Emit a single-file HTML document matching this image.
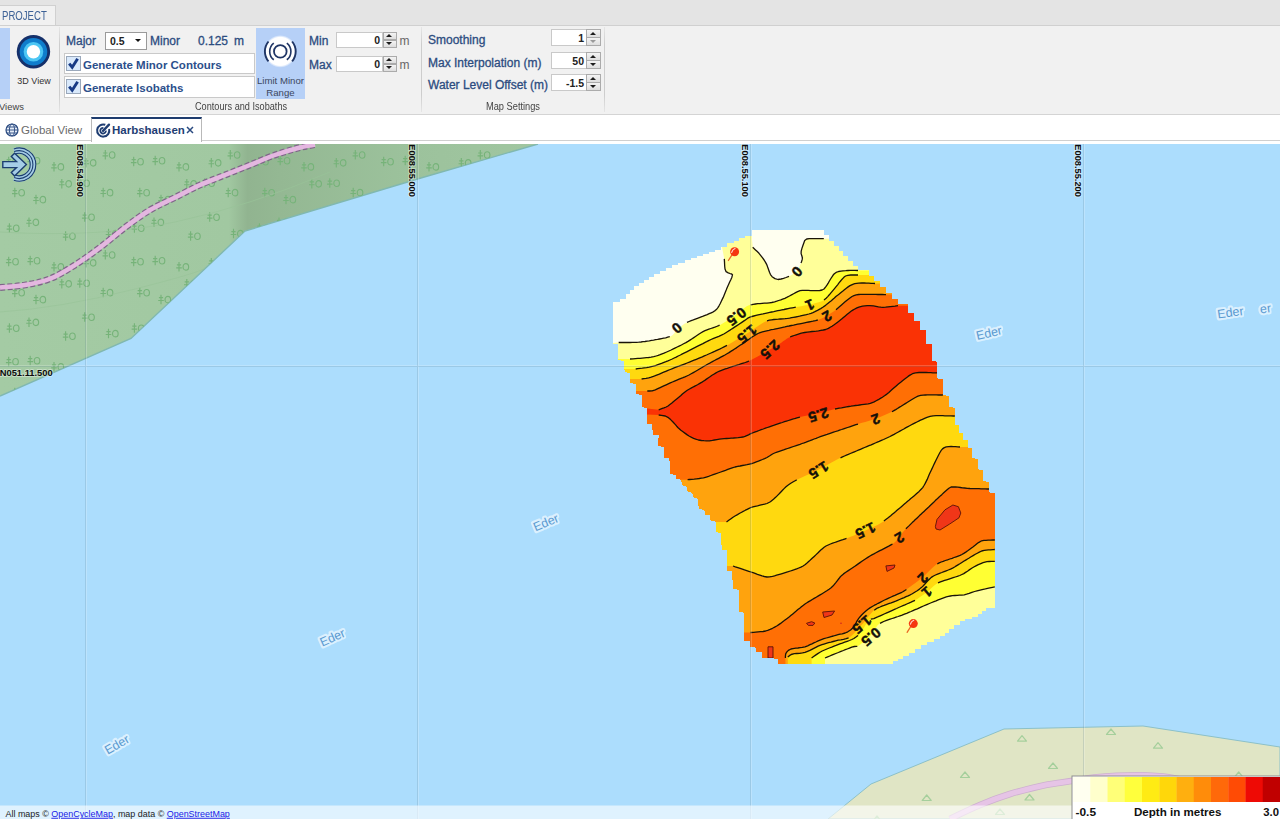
<!DOCTYPE html>
<html><head><meta charset="utf-8"><title>Harbshausen</title>
<style>
*{box-sizing:border-box;margin:0;padding:0}
html,body{width:1280px;height:819px;overflow:hidden;background:#fff;font-family:"Liberation Sans",sans-serif;}
.abs{position:absolute}
#top{position:absolute;left:0;top:0;width:1280px;height:25px;background:#e4e4e4}
#ptab{position:absolute;left:-1px;top:5px;width:57px;height:21px;background:#f1f1f1;border:1px solid #d0d0d0;border-bottom:none}
#ptab span{position:absolute;left:2px;top:2.5px;font-size:12px;color:#3d6196;transform:scaleX(0.80);transform-origin:0 0}
#ribbon{position:absolute;left:0;top:25px;width:1280px;height:90px;background:#f1f1f1;border-top:1px solid #d0d0d0;border-bottom:1px solid #d4d4d4}
.lbl{position:absolute;font-size:12px;color:#2c4c80;-webkit-text-stroke:0.3px #2c4c80;white-space:nowrap;line-height:14px}
.blbl{position:absolute;font-size:11.5px;font-weight:bold;color:#2c4f8c;white-space:nowrap;line-height:14px}
.grp{position:absolute;font-size:10px;color:#444;white-space:nowrap;line-height:12px}
.sep{position:absolute;top:27px;width:1px;height:85px;background:linear-gradient(#e6e6e6,#cdcdcd 20%,#cdcdcd 80%,#e6e6e6)}
.box{position:absolute;background:#fff;border:1px solid #c9c9c9}
.val{position:absolute;font-size:10.5px;font-weight:bold;color:#222;white-space:nowrap;line-height:12px}
.spin{position:absolute;width:14.5px;height:17px}
.spin b,.spin u{position:absolute;left:0;width:14.5px;height:8.6px;border:1px solid #ababab;background:linear-gradient(#f4f4f4,#dedede)}
.spin b{top:0}.spin u{top:8.4px}
.spin b:after{content:"";position:absolute;left:2.6px;top:1.6px;border:3.6px solid transparent;border-top:none;border-bottom:3.4px solid #1d1d1d}
.spin u:after{content:"";position:absolute;left:2.6px;top:1.8px;border:3.6px solid transparent;border-bottom:none;border-top:3.4px solid #1d1d1d}
.spin.dis u:after{border-top-color:#9a9a9a}
.spin.sm{height:15.5px}.spin.sm b,.spin.sm u{height:8px}.spin.sm u{top:7.5px}
.spin.sm b:after{top:1.3px}.spin.sm u:after{top:1.5px}
.unit{position:absolute;font-size:12px;color:#666;line-height:14px}
#tabs{position:absolute;left:0;top:115px;width:1280px;height:29px;background:#fff}
</style></head><body>
<div id="top"><div id="ptab"><span>PROJECT</span></div></div>
<div id="ribbon"></div>

<!-- Views group -->
<div class="abs" style="left:0;top:28px;width:10px;height:71px;background:#b6d0f7"></div>
<svg class="abs" style="left:14px;top:32px" width="40" height="40" viewBox="0 0 40 40">
<circle cx="19.45" cy="19.7" r="16.7" fill="#15306a"/>
<circle cx="19.45" cy="19.7" r="13.8" fill="#0f7dcc"/>
<circle cx="19.45" cy="19.7" r="9.8" fill="#4cc6f4"/>
<circle cx="19.45" cy="19.7" r="6.7" fill="#ffffff"/>
</svg>
<div class="grp" style="left:17.3px;top:75px;font-size:9px;color:#333">3D View</div>
<div class="grp" style="left:-1px;top:101px;font-size:9.4px">Views</div>
<div class="sep" style="left:59px"></div>
<!-- Contours group -->
<div class="lbl" style="left:66px;top:34px">Major</div>
<div class="box" style="left:105px;top:32px;width:42px;height:18px;border-color:#9a9a9a"></div>
<div class="val" style="left:110px;top:35px">0.5</div>
<div class="abs" style="left:135px;top:39px;border:3px solid transparent;border-bottom:none;border-top:3.5px solid #111"></div>
<div class="lbl" style="left:150px;top:34px">Minor</div>
<div class="lbl" style="left:198px;top:34px">0.125</div>
<div class="lbl" style="left:234px;top:34px">m</div>
<div class="box" style="left:64px;top:53px;width:191px;height:21px"></div>
<div class="box" style="left:64px;top:76px;width:191px;height:22px"></div>
<div class="box" style="left:66px;top:56px;width:15px;height:15px;background:#d9e9fb;border-color:#9aa8bb"></div>
<div class="box" style="left:66px;top:79px;width:15px;height:15px;background:#d9e9fb;border-color:#9aa8bb"></div>
<svg class="abs" style="left:66px;top:56px" width="15" height="15" viewBox="0 0 15 15"><path d="M3.2 7.6 L6.2 11.2 L11.6 2.8" fill="none" stroke="#173a85" stroke-width="2.9" stroke-linejoin="miter"/></svg>
<svg class="abs" style="left:66px;top:79px" width="15" height="15" viewBox="0 0 15 15"><path d="M3.2 7.6 L6.2 11.2 L11.6 2.8" fill="none" stroke="#173a85" stroke-width="2.9" stroke-linejoin="miter"/></svg>
<div class="blbl" style="left:83px;top:58px">Generate Minor Contours</div>
<div class="blbl" style="left:83px;top:81px">Generate Isobaths</div>
<div class="abs" style="left:256px;top:28px;width:49px;height:71px;background:#b6d0f7"></div>
<svg class="abs" style="left:260px;top:31px" width="40" height="40" viewBox="0 0 40 40">
<defs><radialGradient id="glow"><stop offset="0.86" stop-color="#fff"/><stop offset="1" stop-color="#fff" stop-opacity="0"/></radialGradient></defs>
<circle cx="20.3" cy="20.4" r="16.3" fill="url(#glow)"/>
<circle cx="20.3" cy="20.4" r="6.3" fill="none" stroke="#1f3565" stroke-width="1.8"/>
<path d="M26.83 12.05A10.6 10.6 0 0 1 26.83 28.75M13.77 28.75A10.6 10.6 0 0 1 13.77 12.05" fill="none" stroke="#1f3565" stroke-width="1.6"/>
<path d="M32.10 10.50A15.4 15.4 0 0 1 32.10 30.30M8.50 30.30A15.4 15.4 0 0 1 8.50 10.50" fill="none" stroke="#1f3565" stroke-width="1.9"/>
</svg>
<div class="grp" style="left:256px;top:75px;width:49px;text-align:center;font-size:9.6px;color:#3c4760;line-height:11.6px;white-space:normal">Limit Minor Range</div>
<div class="grp" style="left:195px;top:101px;transform:scaleX(0.915);transform-origin:0 0">Contours and Isobaths</div>
<div class="lbl" style="left:309px;top:34px">Min</div>
<div class="lbl" style="left:309px;top:57.5px">Max</div>
<div class="box" style="left:336px;top:32px;width:47px;height:15.5px"></div>
<div class="box" style="left:336px;top:56px;width:47px;height:15.5px"></div>
<div class="val" style="left:336px;top:34px;width:44px;text-align:right">0</div>
<div class="val" style="left:336px;top:58px;width:44px;text-align:right">0</div>
<div class="spin sm" style="left:382.5px;top:32px"><b></b><u></u></div>
<div class="spin sm" style="left:382.5px;top:56px"><b></b><u></u></div>
<div class="unit" style="left:399.5px;top:34px">m</div>
<div class="unit" style="left:399.5px;top:57.5px">m</div>
<div class="sep" style="left:421px"></div>
<!-- Map settings -->
<div class="lbl" style="left:428px;top:33px">Smoothing</div>
<div class="lbl" style="left:428px;top:56px">Max Interpolation (m)</div>
<div class="lbl" style="left:428px;top:78px">Water Level Offset (m)</div>
<div class="box" style="left:551px;top:29px;width:36px;height:17px"></div>
<div class="box" style="left:551px;top:52px;width:36px;height:17px"></div>
<div class="box" style="left:551px;top:74px;width:36px;height:17px"></div>
<div class="val" style="left:551px;top:32px;width:33px;text-align:right">1</div>
<div class="val" style="left:551px;top:55px;width:33px;text-align:right">50</div>
<div class="val" style="left:551px;top:77px;width:33px;text-align:right">-1.5</div>
<div class="spin dis" style="left:586px;top:29px"><b></b><u></u></div>
<div class="spin" style="left:586px;top:52px"><b></b><u></u></div>
<div class="spin" style="left:586px;top:74px"><b></b><u></u></div>
<div class="grp" style="left:486px;top:101px;transform:scaleX(0.925);transform-origin:0 0">Map Settings</div>
<div class="sep" style="left:604px"></div>

<div id="tabs"></div>

<div class="abs" style="left:0;top:140px;width:1280px;height:1px;background:#cfcfcf"></div>
<div class="abs" style="left:91px;top:117px;width:111px;height:25px;background:#fff;border:1px solid #b9b9b9;border-top:2px solid #1e3c6e;border-bottom:none"></div>
<svg class="abs" style="left:5px;top:123px" width="14" height="14" viewBox="0 0 14 14">
<circle cx="7" cy="7" r="6" fill="#e4ecf7" stroke="#2a4a80" stroke-width="1.2"/>
<ellipse cx="7" cy="7" rx="2.6" ry="6" fill="none" stroke="#2a4a80" stroke-width="0.9"/>
<path d="M1 7H13M2 4H12M2 10H12" stroke="#2a4a80" stroke-width="0.9" fill="none"/>
</svg>
<div class="abs" style="left:21px;top:123px;font-size:11.5px;color:#6b6b6b;line-height:14px;white-space:nowrap">Global View</div>
<svg class="abs" style="left:95px;top:122px" width="17" height="17" viewBox="0 0 17 17">
<path d="M14.1 6.9 A6.1 6.1 0 1 1 10.3 2.8" fill="none" stroke="#1f3d72" stroke-width="2"/>
<path d="M10.9 8.6 A2.8 2.8 0 1 1 8.4 5.9" fill="none" stroke="#1f3d72" stroke-width="1.8"/>
<path d="M8 8.9 L14 2.6" stroke="#1f3d72" stroke-width="2.3" stroke-linecap="round"/>
</svg>
<div class="abs" style="left:112px;top:123px;font-size:11.5px;font-weight:bold;color:#1f3d73;line-height:14px;white-space:nowrap">Harbshausen</div>
<svg class="abs" style="left:186px;top:126px" width="8" height="8" viewBox="0 0 8 8"><path d="M1 1L7 7M7 1L1 7" stroke="#2a4a80" stroke-width="1.5"/></svg>

<svg id="map" class="abs" style="left:0;top:144px" width="1280" height="675" viewBox="0 144 1280 675" font-family="Liberation Sans, sans-serif">
<rect x="0" y="144" width="1280" height="675" fill="#acddfd"/>

<defs>
<g id="tr" fill="none" stroke="#76b379" stroke-width="1.05" transform="scale(1.12)"><path d="M2.5 0v8.5M0.6 2.6h3.8M0 5.2h5"/><ellipse cx="8.6" cy="4.4" rx="2.5" ry="2.9"/></g>
<pattern id="trees" x="0" y="144" width="125" height="100" patternUnits="userSpaceOnUse"><use href="#tr" x="5.9" y="12.8"/><use href="#tr" x="12.0" y="43.8"/><use href="#tr" x="6.6" y="79.3"/><use href="#tr" x="27.4" y="11.8"/><use href="#tr" x="33.2" y="50.7"/><use href="#tr" x="26.2" y="73.4"/><use href="#tr" x="51.2" y="18.0"/><use href="#tr" x="59.0" y="34.9"/><use href="#tr" x="62.8" y="87.3"/><use href="#tr" x="83.5" y="13.9"/><use href="#tr" x="77.0" y="34.3"/><use href="#tr" x="81.9" y="68.3"/><use href="#tr" x="102.5" y="6.1"/><use href="#tr" x="100.4" y="43.7"/><use href="#tr" x="105.7" y="84.7"/></pattern>
<linearGradient id="fshade" x1="0" y1="0" x2="1" y2="0">
<stop offset="0" stop-color="#a4cba4"/><stop offset="0.425" stop-color="#a1c8a1"/><stop offset="0.46" stop-color="#91b490"/><stop offset="0.52" stop-color="#94b893"/><stop offset="0.76" stop-color="#9cc29c"/><stop offset="1" stop-color="#a0c6a0"/>
</linearGradient>
</defs>
<!-- forest -->
<path id="forest" d="M0 144H538L417.5 179L245 231L131 338.5L0 396Z" fill="url(#fshade)"/>
<path d="M538 144L417.5 179L245 231L131 338.5L0 396" fill="none" stroke="#80b8b0" stroke-width="1.4"/>
<path d="M0 144H538L417.5 179L245 231L131 338.5L0 396Z" fill="url(#trees)"/>
<path d="M0 232Q100 238 175 222T330 172" fill="none" stroke="#98c398" stroke-width="1" opacity=".7"/>
<path d="M0 312Q60 308 131 290T205 268" fill="none" stroke="#98c398" stroke-width="1" opacity=".6"/>
<!-- cycle path -->
<path id="cpath" d="M0 287.5C8.3 286.8 16.7 286.4 25 285C33.3 283.6 41.7 282.1 50 278.8C58.3 275.5 66.7 270.2 75 265C83.3 259.8 91.7 253.8 100 247.5C108.3 241.2 116.7 233.8 125 227.5C133.3 221.2 141.7 215.0 150 210C158.3 205.0 166.7 201.7 175 197.5C183.3 193.3 191.7 188.8 200 185C208.3 181.2 216.7 178.3 225 175C233.3 171.7 241.7 168.3 250 165C258.3 161.7 266.7 157.9 275 155C283.3 152.1 293.3 149.2 300 147.5C306.7 145.8 308.3 146.1 315 144.5" fill="none" stroke="#7f6589" stroke-width="6.8" stroke-dasharray="5 2.5"/>
<path d="M0 287.5C8.3 286.8 16.7 286.4 25 285C33.3 283.6 41.7 282.1 50 278.8C58.3 275.5 66.7 270.2 75 265C83.3 259.8 91.7 253.8 100 247.5C108.3 241.2 116.7 233.8 125 227.5C133.3 221.2 141.7 215.0 150 210C158.3 205.0 166.7 201.7 175 197.5C183.3 193.3 191.7 188.8 200 185C208.3 181.2 216.7 178.3 225 175C233.3 171.7 241.7 168.3 250 165C258.3 161.7 266.7 157.9 275 155C283.3 152.1 293.3 149.2 300 147.5C306.7 145.8 308.3 146.1 315 144.5" fill="none" stroke="#e4b7e0" stroke-width="4.4"/>
<!-- land bottom-right -->
<path d="M828 819L871 784L1004 729L1143 726L1280 747V819Z" fill="#e0e5c5" stroke="#8cc0c8" stroke-width="1"/>
<g fill="none" stroke="#a5cf9c" stroke-width="1.2" stroke-linejoin="round"><path d="M1017.5 741.1L1022.0 735.6L1026.5 741.1Z"/><path d="M1106.5 734.5L1111.0 729.0L1115.5 734.5Z"/><path d="M1153.5 748.2L1158.0 742.7L1162.5 748.2Z"/><path d="M1048.5 768.5L1053.0 763.0L1057.5 768.5Z"/><path d="M960.5 777.5L965.0 772.0L969.5 777.5Z"/><path d="M922.2 800.5L926.7 795.0L931.2 800.5Z"/><path d="M1025.0 800.0L1029.5 794.5L1034.0 800.0Z"/><path d="M1234.2 777.5L1238.7 772.0L1243.2 777.5Z"/><path d="M872.5 821.5L877.0 816.0L881.5 821.5Z"/><path d="M995.5 814.5L1000.0 809.0L1004.5 814.5Z"/></g>
<path d="M950 819C960.0 814.0 970.0 809.2 980 805C990.0 800.8 1000.0 797.1 1010 794C1020.0 790.9 1031.7 788.1 1040 786.2C1048.3 784.3 1053.8 783.8 1060 782.8C1066.2 781.8 1071.3 781.1 1077 780.2C1082.7 779.3 1087.4 778.3 1094 777.6C1100.6 776.9 1108.6 776.2 1116.7 775.8C1124.8 775.4 1134.8 775.1 1142.5 775.2C1150.2 775.3 1156.8 775.9 1163 776.6C1169.2 777.3 1168.8 777.3 1180 779.2C1191.2 781.1 1213.3 785.0 1230 788C1246.7 791.0 1268.3 795.0 1280 797" fill="none" stroke="#cdb0cf" stroke-width="6.6"/>
<path d="M950 819C960.0 814.0 970.0 809.2 980 805C990.0 800.8 1000.0 797.1 1010 794C1020.0 790.9 1031.7 788.1 1040 786.2C1048.3 784.3 1053.8 783.8 1060 782.8C1066.2 781.8 1071.3 781.1 1077 780.2C1082.7 779.3 1087.4 778.3 1094 777.6C1100.6 776.9 1108.6 776.2 1116.7 775.8C1124.8 775.4 1134.8 775.1 1142.5 775.2C1150.2 775.3 1156.8 775.9 1163 776.6C1169.2 777.3 1168.8 777.3 1180 779.2C1191.2 781.1 1213.3 785.0 1230 788C1246.7 791.0 1268.3 795.0 1280 797" fill="none" stroke="#e6c4e6" stroke-width="5"/>

<!-- BATHY-START -->
<g id="bathy">
<mask id="bmask" maskUnits="userSpaceOnUse" x="600" y="220" width="420" height="460"><polygon points="760.0,230.3 824.0,230.3 824.0,235.4 828.9,235.4 828.9,240.5 833.7,240.5 833.7,245.6 838.6,245.6 838.6,250.7 843.4,250.7 843.4,255.8 848.3,255.8 848.3,260.9 853.1,260.9 853.1,266.0 858.0,266.0 858.0,270.0 868.5,270.0 868.5,275.7 874.4,275.7 874.4,281.4 880.3,281.4 880.3,287.2 886.2,287.2 886.2,292.9 892.1,292.9 892.1,298.6 898.0,298.6 898.0,304.0 908.0,304.0 908.0,312.7 914.0,312.7 914.0,321.3 920.0,321.3 920.0,330.0 926.0,330.0 926.0,344.0 931.7,344.0 931.7,361.0 937.3,361.7 937.3,378.4 942.9,379.0 942.9,395.0 949.0,396.0 949.0,407.0 954.8,407.8 954.8,418.0 954.8,425.4 959.1,425.4 959.1,432.8 963.4,432.8 963.4,440.1 967.7,440.1 967.7,447.5 972.0,447.5 972.0,458.0 977.5,459.0 978.0,469.4 983.0,470.0 983.0,481.0 988.6,482.0 989.4,492.4 994.8,493.0 994.8,607.5 986.0,607.5 986.0,611.0 982.0,611.0 982.0,614.0 978.0,614.0 978.0,617.0 971.5,617.0 971.5,619.2 965.0,619.2 965.0,621.4 959.5,621.4 959.5,625.3 954.0,625.3 954.0,629.3 949.3,629.3 949.3,632.5 944.7,632.5 944.7,635.8 940.0,635.8 940.0,639.0 933.5,639.0 933.5,642.0 927.0,642.0 927.0,645.0 920.8,645.0 920.8,649.0 914.5,649.0 914.5,653.0 908.8,653.0 908.8,656.0 903.0,656.0 903.0,659.0 898.0,659.0 898.0,661.4 892.9,661.4 892.9,663.8 778.0,663.8 778.0,658.7 761.6,658.0 761.6,652.4 756.0,651.6 756.0,647.6 750.5,646.8 749.7,641.0 744.0,640.5 744.0,612.7 738.6,612.0 738.6,589.7 733.0,589.0 732.0,571.4 726.7,570.6 726.5,550.3 721.7,549.5 721.0,533.6 716.2,532.0 716.2,521.7 710.6,521.0 709.8,515.4 705.0,514.6 704.3,509.8 698.7,509.0 698.0,498.7 693.0,497.0 692.4,493.0 687.6,491.6 686.8,486.8 682.0,485.0 681.0,479.7 676.5,479.0 675.7,475.0 670.0,474.0 669.4,458.0 664.0,457.5 664.0,447.0 658.0,446.0 658.7,435.5 653.0,434.7 652.0,424.5 647.0,423.6 647.0,408.0 641.6,407.0 641.6,395.0 636.0,394.0 636.0,384.0 630.0,383.0 630.0,373.0 624.6,372.0 624.0,361.0 618.0,360.0 618.0,343.5 613.0,343.5 613.0,306.0 613.0,302.2 619.5,302.2 619.5,298.5 626.0,298.5 626.0,294.2 630.2,294.2 630.2,289.8 634.3,289.8 634.3,285.5 638.5,285.5 638.5,282.7 643.7,282.7 643.7,279.8 648.8,279.8 648.8,277.0 654.0,277.0 654.0,274.0 660.0,274.0 660.0,271.0 666.0,271.0 666.0,268.0 672.0,268.0 672.0,265.4 678.2,265.4 678.2,262.8 684.5,262.8 684.5,260.1 690.8,260.1 690.8,257.5 697.0,257.5 697.0,255.6 702.9,255.6 702.9,253.8 708.8,253.8 708.8,251.9 714.6,251.9 714.6,250.0 720.5,250.0 720.5,246.5 727.0,246.5 727.0,243.0 733.5,243.0 733.5,240.5 739.0,240.5 739.0,238.0 744.5,238.0 744.5,235.5 752.0,235.5 752.0,230.3 760.0,230.3" fill="#fff" shape-rendering="crispEdges"/></mask>
<g mask="url(#bmask)">
<rect x="600" y="220" width="420" height="460" fill="#ffff99"/>
<polygon points="590.0,343.0 613.0,343.0 618.7,342.5 621.5,342.5 625.9,342.5 631.2,342.5 636.5,342.3 641.0,342.0 646.0,341.3 652.6,340.3 659.6,339.0 665.7,337.8 669.8,336.7 672.1,335.5 673.7,334.0 674.8,332.4 675.9,330.8 677.0,329.5 678.4,328.3 680.1,326.9 682.1,325.4 684.4,323.8 687.0,322.4 691.2,320.6 697.4,318.3 704.1,315.8 710.2,313.3 714.3,311.3 716.7,309.2 718.5,306.7 720.0,304.0 721.2,301.5 722.2,299.4 723.2,297.4 724.2,295.0 725.2,292.5 726.2,290.1 727.0,288.0 728.0,285.7 729.4,282.8 730.8,279.8 731.9,277.2 732.5,275.5 732.5,274.7 732.0,274.2 731.4,273.9 730.6,273.8 730.0,273.5 729.2,273.2 728.2,272.8 727.1,272.4 726.1,271.7 725.4,270.8 725.0,269.0 724.7,266.3 724.5,263.2 724.4,260.5 724.3,258.9 722.0,247.0 719.0,225.0 590.0,225.0" fill="#fffff0"/>
<polygon points="752.0,225.0 830.0,225.0 830.0,238.7 823.8,238.7 821.4,238.7 817.6,238.6 813.2,238.6 809.2,238.7 806.7,239.0 805.5,239.6 804.7,240.5 804.2,241.6 803.9,242.7 803.5,243.8 803.0,245.2 802.4,247.1 801.7,249.2 801.2,251.1 801.0,252.5 801.1,253.6 801.4,254.8 801.9,256.0 802.2,257.1 802.4,258.0 802.3,258.9 802.1,259.9 801.8,260.9 801.4,262.0 801.0,263.0 800.5,264.3 799.7,266.0 798.9,267.9 797.9,269.7 797.0,271.0 795.8,272.1 794.2,273.3 792.4,274.5 790.6,275.5 789.0,276.3 787.2,277.1 784.7,277.9 782.2,278.7 779.8,279.3 778.0,279.5 776.6,279.2 775.0,278.6 773.5,277.8 772.1,276.7 771.0,275.5 770.0,273.7 769.0,271.0 768.0,268.0 767.0,265.2 766.0,263.0 764.9,261.1 763.4,259.0 761.8,256.8 760.2,254.8 759.0,253.3 757.8,252.0 756.3,250.6 754.8,249.2 753.5,248.0 752.7,247.3 752.0,240.0" fill="#fffff0"/>
<polygon points="590.0,359.0 630.0,359.0 633.0,358.8 637.8,358.4 643.3,358.0 648.6,357.5 652.4,357.0 655.2,356.3 658.2,355.4 661.1,354.3 664.0,353.2 666.7,352.0 670.0,350.5 674.4,348.4 679.1,346.1 683.6,343.8 687.0,342.0 690.0,340.1 693.4,337.9 696.9,335.5 700.2,333.3 703.0,331.6 706.0,330.3 709.8,328.9 713.8,327.5 717.6,326.1 720.6,324.8 723.4,323.1 726.8,321.0 730.2,318.6 733.4,316.3 736.0,314.5 738.4,312.7 741.0,310.5 743.9,308.3 746.7,306.3 749.5,305.0 753.1,304.3 757.9,303.7 763.2,303.3 768.1,303.0 771.7,302.5 774.6,301.8 777.7,300.9 780.8,299.8 783.6,298.8 786.0,297.8 788.5,296.6 791.5,294.9 794.6,293.1 797.6,291.6 800.0,290.6 802.4,290.3 805.2,290.3 808.1,290.4 810.8,290.6 813.0,290.6 815.0,290.6 817.4,290.6 819.8,290.5 822.1,290.0 824.0,289.0 825.9,286.7 828.2,283.1 830.6,279.0 833.0,275.3 835.0,273.0 837.2,271.9 840.0,271.2 843.0,270.8 845.8,270.7 848.0,270.5 850.0,270.4 852.4,270.4 854.8,270.4 856.8,270.5 858.0,270.5 918.0,270.5 1100.0,270.5 1100.0,900.0 500.0,900.0 500.0,359.0" fill="#ffff33"/>
<polygon points="595.7,369.0 635.7,369.0 637.8,368.7 641.2,368.3 645.3,367.8 649.2,367.2 652.4,366.5 655.4,365.6 659.1,364.3 663.1,362.8 666.8,361.3 670.0,360.0 673.2,358.5 677.2,356.6 681.4,354.4 685.5,352.4 689.0,350.6 692.8,348.7 697.7,346.2 702.9,343.6 707.5,341.2 711.0,339.5 713.6,338.3 716.2,337.3 718.8,336.3 721.4,335.2 723.8,334.0 727.0,332.1 731.3,329.3 735.9,326.2 740.0,323.5 742.9,321.6 744.7,320.4 746.1,319.3 747.4,318.4 748.9,317.6 750.8,316.8 753.8,316.0 758.1,314.9 763.0,313.9 767.8,312.8 771.7,312.0 775.8,311.1 780.8,310.1 786.2,309.0 791.1,308.0 794.8,307.3 797.9,306.7 801.2,306.2 804.5,305.6 807.5,305.1 810.0,304.5 812.6,303.9 815.6,303.1 818.8,302.2 821.7,301.2 824.0,300.0 826.1,298.2 828.4,295.7 830.9,292.9 833.1,290.2 835.0,288.0 836.8,285.8 839.0,282.9 841.3,280.1 843.6,277.6 845.5,276.0 847.8,275.3 850.7,275.0 853.8,274.9 856.4,275.0 858.0,275.0 918.0,275.0 1100.0,275.0 1100.0,900.0 500.0,900.0 500.0,369.0" fill="#ffd90f"/>
<polygon points="601.6,379.0 641.6,379.0 642.9,378.8 644.9,378.5 647.4,378.0 650.0,377.5 652.4,376.8 655.3,375.7 659.3,374.1 663.7,372.2 668.0,370.4 671.4,369.0 674.7,367.7 678.8,366.2 683.0,364.6 687.1,363.0 690.5,361.7 694.1,360.2 698.5,358.4 703.2,356.4 707.6,354.5 711.0,353.0 714.0,351.7 717.3,350.1 720.7,348.5 724.0,346.9 727.0,345.4 730.3,343.5 734.5,341.0 739.1,338.3 743.4,335.7 747.0,333.5 750.5,331.2 754.7,328.2 759.2,325.2 763.5,322.6 767.0,320.8 770.6,319.9 774.9,319.4 779.5,319.1 783.9,318.8 787.6,318.4 791.6,317.7 796.5,316.8 801.7,315.7 806.4,314.7 810.0,313.7 812.9,312.6 815.9,311.2 818.8,309.6 821.6,308.0 824.0,306.5 826.5,304.6 829.6,302.1 832.9,299.3 835.9,296.6 838.4,294.6 840.7,292.7 843.5,290.5 846.3,288.2 848.9,286.3 851.0,285.0 852.8,284.3 854.7,283.7 856.7,283.4 858.7,283.1 860.6,283.0 863.1,283.0 866.4,283.1 870.0,283.2 873.1,283.4 875.0,283.5 935.0,283.5 1100.0,283.5 1100.0,900.0 500.0,900.0 500.0,379.0" fill="#ffa30d"/>
<polygon points="607.3,391.0 647.3,391.0 648.0,391.0 649.2,391.0 650.6,391.0 652.2,390.8 654.0,390.3 656.5,389.2 660.2,387.6 664.3,385.7 668.2,383.9 671.4,382.4 674.5,381.1 678.2,379.6 682.1,378.0 685.8,376.5 689.0,375.0 692.3,373.2 696.3,370.9 700.6,368.4 704.6,365.9 708.0,364.0 711.4,362.2 715.5,360.0 719.8,357.7 723.8,355.6 727.0,353.8 729.9,352.0 733.3,349.8 736.8,347.5 740.1,345.3 742.9,343.5 745.7,341.6 749.0,339.2 752.5,336.8 755.9,334.6 759.0,333.0 762.4,331.9 766.7,330.8 771.3,329.7 775.9,328.8 779.7,328.0 783.9,327.1 789.1,326.0 794.7,324.8 799.7,323.8 803.5,323.0 806.5,322.4 809.7,321.8 812.9,321.2 815.6,320.6 817.8,320.0 819.7,319.3 821.7,318.4 823.6,317.4 825.5,316.4 827.0,315.5 828.6,314.6 830.4,313.5 832.4,312.2 834.3,311.0 836.0,309.7 838.0,308.0 840.6,305.7 843.4,303.3 846.0,301.0 848.0,299.4 849.6,298.2 851.1,297.1 852.9,296.0 854.9,295.1 857.5,294.6 861.9,294.4 868.6,294.3 875.8,294.4 882.1,294.5 886.0,294.6 946.0,294.6 1100.0,294.6 1100.0,900.0 500.0,900.0 500.0,391.0" fill="#ff6f05"/>
<polygon points="607.0,408.5 647.0,408.5 658.7,409.8 659.9,409.4 661.7,408.7 663.9,407.9 666.2,407.0 668.0,406.0 669.9,404.6 672.4,402.6 675.1,400.3 677.5,398.3 679.4,396.7 680.9,395.5 682.4,394.1 684.0,392.8 685.6,391.5 687.3,390.3 689.5,389.0 692.4,387.4 695.7,385.7 698.9,383.9 701.6,382.4 704.3,380.6 707.6,378.4 711.2,375.9 714.6,373.7 717.5,372.0 720.5,370.7 724.3,369.3 728.3,367.9 732.1,366.7 735.0,365.7 737.5,364.9 740.4,364.0 743.3,363.1 746.2,362.1 749.0,361.0 752.5,359.2 757.2,356.7 762.2,353.9 766.8,351.3 770.0,349.5 772.3,348.2 774.4,347.0 776.4,345.8 778.1,344.8 779.7,343.8 781.3,342.7 783.1,341.3 785.1,339.9 787.1,338.5 789.0,337.5 791.2,336.6 794.1,335.5 797.3,334.4 800.5,333.4 803.5,332.7 807.2,332.1 812.0,331.5 817.3,330.9 822.2,330.3 825.7,329.5 828.4,328.4 831.1,326.8 833.8,325.0 836.3,323.2 838.4,321.6 840.7,319.8 843.4,317.5 846.3,315.1 848.9,312.9 851.0,311.3 852.8,310.1 854.8,309.0 856.9,307.9 858.9,307.1 860.6,306.5 862.5,306.1 864.8,305.9 867.3,305.7 869.7,305.7 871.7,305.7 873.6,305.9 875.9,306.3 878.4,306.8 880.8,307.1 883.0,307.3 885.6,307.2 889.2,306.8 892.9,306.3 896.0,305.9 898.0,305.7 958.0,305.7 1100.0,305.7 1100.0,900.0 500.0,900.0 500.0,408.5" fill="#fa3205"/>
<polygon points="607.0,414.5 647.0,414.5 658.7,415.0 659.7,415.1 661.4,415.4 663.4,415.6 665.3,416.0 666.7,416.5 667.9,417.3 669.2,418.4 670.6,419.6 671.9,420.9 673.0,422.0 674.1,423.2 675.4,424.6 676.7,426.2 678.1,427.8 679.4,429.0 680.9,430.3 683.0,431.8 685.2,433.4 687.3,434.9 689.0,436.0 690.6,436.9 692.6,437.8 694.7,438.7 696.7,439.5 698.4,440.0 700.3,440.3 702.6,440.6 705.1,440.7 707.5,440.8 709.5,440.8 711.3,440.6 713.4,440.2 715.7,439.8 718.1,439.4 720.6,439.0 724.1,438.7 729.1,438.3 734.5,437.9 739.5,437.5 742.9,437.0 745.0,436.4 746.8,435.7 748.5,434.8 750.3,433.9 752.4,433.0 755.7,431.8 760.2,430.1 765.4,428.2 770.4,426.5 774.6,425.0 779.0,423.5 784.5,421.7 790.4,419.9 795.8,418.2 800.0,417.0 803.5,416.2 807.4,415.4 811.3,414.8 815.0,414.1 818.0,413.5 821.0,412.7 824.6,411.8 828.4,410.7 832.0,409.7 835.0,409.0 838.0,408.4 841.5,407.8 845.3,407.1 848.9,406.5 852.0,406.0 855.4,405.5 859.6,405.0 864.1,404.4 868.2,403.8 871.4,403.0 874.2,401.9 877.3,400.3 880.4,398.4 883.3,396.6 885.7,395.0 888.0,393.2 890.7,390.8 893.5,388.3 896.2,385.9 898.4,384.0 900.7,382.2 903.5,379.9 906.4,377.7 909.0,375.7 911.0,374.4 912.5,373.7 914.0,373.2 915.5,372.8 917.2,372.6 919.0,372.5 921.9,372.5 926.2,372.5 930.8,372.7 934.8,372.8 937.3,372.9 997.3,372.9 1100.0,372.9 1100.0,900.0 500.0,900.0 500.0,414.5" fill="#ff6f05"/>
<polygon points="647.6,479.7 687.6,479.7 689.6,479.5 692.9,479.2 696.8,478.8 700.5,478.3 703.5,477.8 706.3,477.0 709.7,475.9 713.2,474.7 716.6,473.5 719.4,472.5 722.2,471.5 725.5,470.3 728.9,469.0 732.2,467.9 735.0,467.0 737.8,466.4 741.2,465.7 744.8,465.1 748.2,464.5 751.0,463.8 753.9,462.8 757.5,461.5 761.2,460.0 764.6,458.6 767.0,457.5 768.5,456.7 769.8,455.8 771.0,454.9 772.5,454.0 774.6,453.0 778.2,451.7 783.6,449.9 789.6,447.8 795.4,445.9 800.0,444.3 804.2,442.8 809.0,441.0 814.1,439.0 819.2,437.2 823.8,435.5 829.4,433.6 836.7,431.1 844.5,428.5 851.7,426.1 857.0,424.4 861.1,423.1 865.2,421.9 869.3,420.7 873.0,419.5 876.0,418.5 879.0,417.4 882.4,416.0 885.9,414.5 889.2,413.0 892.0,411.7 894.9,410.1 898.3,408.0 902.0,405.7 905.3,403.6 908.0,402.0 910.3,400.6 912.7,399.0 915.3,397.5 918.0,396.2 920.6,395.4 924.3,395.0 929.5,394.9 935.1,394.9 939.9,395.0 942.9,395.0 1002.9,395.0 1100.0,395.0 1100.0,900.0 500.0,900.0 500.0,479.7" fill="#ffa30d"/>
<polygon points="686.5,522.0 726.5,522.0 727.5,521.3 729.1,520.1 731.0,518.7 733.0,517.2 735.0,516.0 737.5,514.6 740.8,512.7 744.5,510.6 748.1,508.8 751.0,507.5 753.9,506.6 757.5,505.8 761.2,505.0 764.6,504.2 767.0,503.5 768.8,502.7 770.4,501.7 772.0,500.5 773.5,499.3 775.0,498.0 776.8,496.2 779.2,493.8 781.7,491.1 784.1,488.6 786.0,486.8 787.6,485.5 789.3,484.3 791.2,483.0 793.3,481.8 795.6,480.5 799.0,478.8 803.8,476.5 809.3,474.0 814.4,471.5 818.6,469.5 822.5,467.5 827.1,464.9 832.0,462.3 836.6,459.8 840.5,457.8 844.5,456.0 849.3,453.9 854.4,451.8 859.3,449.8 863.5,448.0 867.9,446.1 873.4,443.8 879.2,441.4 884.7,439.0 889.0,437.0 893.1,434.9 897.9,432.2 902.9,429.5 907.5,426.9 911.0,425.0 914.2,423.4 917.8,421.6 921.4,419.8 924.6,418.3 927.0,417.3 928.7,416.7 930.1,416.3 931.5,416.0 933.1,415.8 935.0,415.7 938.2,415.7 942.8,415.7 947.8,415.8 952.1,415.9 954.8,416.0 1014.8,416.0 1100.0,416.0 1100.0,900.0 500.0,900.0 500.0,522.0" fill="#ffd90f"/>
<polygon points="693.0,566.0 733.0,566.0 735.3,566.8 739.1,568.0 743.5,569.5 747.7,570.9 751.0,572.0 753.9,573.0 757.4,574.3 761.0,575.5 764.3,576.5 767.0,577.0 769.5,576.9 772.5,576.3 775.5,575.5 778.6,574.6 781.4,573.8 784.9,572.8 789.4,571.3 794.4,569.7 798.8,568.0 802.0,566.7 804.2,565.4 806.3,563.7 808.3,562.0 810.2,560.2 812.0,558.5 814.2,556.4 817.0,553.7 820.1,550.7 823.2,548.0 826.0,546.0 829.3,544.4 833.7,542.8 838.4,541.2 842.9,539.7 846.5,538.4 849.9,537.0 854.0,535.4 858.3,533.6 862.2,531.9 865.5,530.5 868.6,529.1 872.2,527.5 876.0,525.7 879.7,523.7 883.0,521.7 886.7,518.9 891.4,515.1 896.5,510.8 901.3,506.7 905.0,503.5 908.4,500.6 912.4,497.3 916.4,493.9 920.0,490.5 922.7,487.6 924.7,484.4 926.7,480.5 928.6,476.2 930.4,472.1 932.0,468.6 933.8,464.8 936.1,460.0 938.6,455.0 941.0,450.7 943.3,448.0 946.2,446.9 950.1,446.5 954.2,446.6 957.8,446.9 960.0,447.0 1020.0,447.0 1100.0,447.0 1100.0,900.0 500.0,900.0 500.0,566.0" fill="#ffa30d"/>
<polygon points="710.5,632.5 750.5,632.5 752.5,632.4 755.7,632.1 759.4,631.8 763.0,631.5 765.6,631.0 767.7,630.3 770.1,629.4 772.5,628.3 774.7,627.1 776.7,626.0 778.8,624.6 781.4,622.7 784.3,620.6 787.0,618.6 789.4,616.7 792.0,614.6 795.3,611.8 798.8,608.9 802.2,606.1 805.0,604.0 807.9,602.1 811.4,600.0 815.0,597.9 818.4,595.9 821.0,594.4 823.2,593.0 825.6,591.6 828.0,590.0 830.2,588.5 832.0,587.0 833.8,585.1 835.8,582.6 837.9,579.9 839.9,577.3 841.7,575.4 843.5,573.9 845.8,572.3 848.3,570.6 850.7,569.0 853.0,567.5 855.7,565.7 859.1,563.3 862.9,560.6 866.7,558.1 870.0,556.0 873.9,553.9 879.0,551.2 884.4,548.4 889.2,545.9 892.5,544.0 894.5,542.5 896.1,541.0 897.4,539.6 898.5,538.2 899.5,537.0 900.4,535.9 901.2,534.6 902.2,533.1 903.4,531.5 905.0,529.7 907.6,527.1 911.5,523.3 915.9,519.1 920.3,514.9 924.0,511.4 928.2,507.4 933.7,502.2 939.5,496.7 944.6,492.0 948.0,489.0 949.9,487.6 951.1,487.0 952.1,486.9 953.1,486.9 954.4,487.0 956.5,487.1 959.3,487.4 962.5,487.8 965.8,488.2 968.7,488.4 972.2,488.6 977.0,488.7 982.0,488.8 986.3,488.9 989.0,489.0 1049.0,489.0 1100.0,489.0 1100.0,900.0 500.0,900.0 500.0,632.5" fill="#ff6f05"/>
<polygon points="785.4,700.0 785.4,658.0 785.4,657.3 785.4,656.3 785.5,655.1 785.7,653.9 786.0,653.0 786.6,652.2 787.4,651.3 788.4,650.4 789.6,649.6 791.0,649.0 793.0,648.6 795.9,648.2 799.1,647.9 802.3,647.4 805.0,646.8 807.7,645.8 811.1,644.2 814.7,642.5 818.2,640.9 821.0,639.7 823.9,638.7 827.4,637.7 831.1,636.6 834.5,635.7 837.0,635.0 839.0,634.5 841.1,634.0 843.2,633.5 845.1,633.0 846.5,632.5 847.8,631.8 849.2,631.0 850.6,630.0 851.9,628.9 853.0,627.8 854.0,626.3 855.2,624.3 856.5,622.0 857.8,619.8 859.0,618.0 860.5,616.3 862.3,614.3 864.5,612.3 866.7,610.3 868.7,608.7 871.2,607.1 874.5,605.2 878.2,603.3 881.7,601.4 884.6,600.0 887.5,598.6 891.2,597.0 894.9,595.4 898.2,593.9 900.5,592.9 901.8,592.3 902.6,591.9 903.3,591.5 904.2,590.9 905.6,590.0 908.1,588.2 911.8,585.5 916.0,582.4 919.9,579.4 923.0,577.0 925.6,574.6 928.4,571.7 931.4,568.7 934.4,565.9 937.3,563.8 941.2,562.0 946.4,560.1 952.1,558.3 957.2,556.5 961.0,555.0 963.8,553.4 966.7,551.5 969.5,549.5 971.9,547.7 973.8,546.3 975.4,545.1 976.9,543.8 978.5,542.6 980.1,541.5 981.7,540.8 983.9,540.4 987.0,540.2 990.2,540.1 993.1,540.0 994.8,540.0 1054.8,540.0 1100.0,540.0 1100.0,900.0 500.0,900.0 500.0,700.0" fill="#ffa30d"/>
<polygon points="787.8,700.0 787.8,657.0 788.3,656.6 789.1,655.9 790.1,655.2 791.2,654.5 792.5,654.0 794.3,653.7 796.8,653.5 799.7,653.3 802.5,652.9 805.0,652.4 807.6,651.3 811.0,649.7 814.7,647.9 818.1,646.2 821.0,645.0 823.9,644.1 827.3,643.1 831.0,642.1 834.3,641.2 837.0,640.5 839.4,640.0 842.1,639.5 844.9,639.0 847.5,638.3 849.7,637.3 851.9,635.5 854.5,632.9 857.2,629.9 859.8,627.0 862.0,624.5 864.2,621.9 866.8,618.5 869.7,615.0 872.5,611.8 875.0,609.5 878.0,607.8 882.0,606.1 886.2,604.6 890.0,603.3 892.5,602.4 893.9,601.8 894.9,601.4 895.7,601.1 896.5,600.8 897.6,600.3 899.5,599.5 902.2,598.4 905.2,597.1 908.1,595.9 910.3,594.8 912.3,593.7 914.7,592.2 917.2,590.7 919.5,589.1 921.4,587.6 923.3,585.8 925.4,583.4 927.8,580.8 930.2,578.3 932.5,576.5 935.5,575.0 939.6,573.3 944.1,571.6 948.3,570.0 951.6,568.6 954.6,567.0 958.0,564.9 961.5,562.7 964.8,560.6 967.5,559.0 970.1,557.4 973.1,555.6 976.3,553.7 979.3,552.1 981.7,551.0 984.2,550.4 987.3,550.0 990.5,549.8 993.1,549.6 994.8,549.5 1054.8,549.5 1100.0,549.5 1100.0,900.0 500.0,900.0 500.0,700.0" fill="#ffd90f"/>
<polygon points="811.6,700.0 811.6,658.0 812.7,657.2 814.5,655.9 816.7,654.3 818.9,652.8 821.0,651.6 823.5,650.4 826.9,649.0 830.6,647.5 834.1,646.1 837.0,645.0 839.9,643.9 843.5,642.7 847.2,641.3 850.6,640.1 853.0,639.0 854.8,638.0 856.5,636.7 858.1,635.4 859.5,633.9 860.8,632.5 862.2,630.5 864.0,627.6 865.8,624.5 867.4,621.7 868.7,620.0 869.5,619.3 870.2,619.2 870.9,619.2 872.0,619.2 873.8,618.6 877.2,617.1 882.3,614.9 888.0,612.3 893.5,609.8 897.6,608.0 901.0,606.5 904.9,604.9 908.8,603.2 912.3,601.6 915.0,600.3 917.4,598.9 920.0,597.1 922.6,595.3 925.0,593.5 927.0,592.0 928.8,590.4 930.9,588.5 933.1,586.4 935.5,584.5 938.0,582.9 941.6,581.5 946.6,579.8 952.2,578.0 957.3,576.4 961.0,575.0 963.8,573.6 966.6,571.8 969.3,569.9 971.7,568.3 973.8,567.0 975.9,565.9 978.3,564.7 980.8,563.6 983.1,562.6 985.0,562.0 986.9,561.7 989.2,561.5 991.6,561.4 993.6,561.4 994.8,561.4 1054.8,561.4 1100.0,561.4 1100.0,900.0 500.0,900.0 500.0,700.0" fill="#ffff33"/>
<polygon points="825.0,700.0 825.0,658.0 826.5,657.4 828.9,656.4 831.7,655.2 834.6,654.0 837.0,653.0 839.8,651.9 843.4,650.5 847.2,649.0 850.6,647.7 853.0,646.8 854.4,646.5 855.4,646.4 856.3,646.4 857.3,646.3 858.4,645.7 860.3,644.4 862.9,642.3 865.8,639.9 868.5,637.5 870.6,635.5 872.2,633.4 873.8,630.8 875.6,628.0 877.6,625.3 880.0,623.3 883.7,621.5 889.1,619.5 895.2,617.4 901.0,615.5 905.6,613.8 909.9,612.0 915.1,609.7 920.5,607.4 925.5,605.2 929.4,603.5 933.0,602.0 937.1,600.3 941.4,598.7 945.3,597.3 948.4,596.3 951.4,595.8 954.9,595.5 958.4,595.3 961.7,595.1 964.3,594.8 966.6,594.2 969.2,593.4 971.9,592.4 974.6,591.5 977.0,590.8 980.1,590.0 984.3,589.1 988.7,588.1 992.5,587.3 994.8,586.8 1054.8,586.8 1100.0,586.8 1100.0,900.0 500.0,900.0 500.0,700.0" fill="#ffff99"/>
<polygon points="935.4,526.5 937.0,519.4 945.0,509.8 952.9,505.0 958.4,506.7 960.8,513.0 959.0,517.8 949.7,524.0 940.0,530.0 936.0,529.0" fill="#f03618" stroke="#5a1208" stroke-width="0.9" stroke-linejoin="round"/>
<polygon points="822.7,612.0 834.6,611.0 832.0,615.0 824.0,617.5" fill="#f03618" stroke="#5a1208" stroke-width="0.9" stroke-linejoin="round"/>
<polygon points="806.5,623.3 811.6,621.7 814.8,623.0 813.0,625.4 808.4,625.4" fill="#f03618" stroke="#5a1208" stroke-width="0.9" stroke-linejoin="round"/>
<polygon points="885.9,565.9 895.0,565.0 894.0,568.0 887.0,571.4" fill="#f03618" stroke="#5a1208" stroke-width="0.9" stroke-linejoin="round"/>
<polygon points="768.0,646.8 773.0,646.8 773.0,658.0 768.0,658.0" fill="#f03618" stroke="#5a1208" stroke-width="0.9" stroke-linejoin="round"/>
<circle cx="841" cy="623.3" r="0.8" fill="#c22"/>
<g fill="none" stroke="#1a1408" stroke-width="1.3" stroke-linejoin="round" stroke-linecap="butt">
<polyline points="618.7,342.5 621.5,342.5 623.7,342.5 625.9,342.5 628.0,342.5 630.1,342.5 632.3,342.4 634.4,342.4 636.5,342.3 638.7,342.2 641.0,342.0 643.0,341.7 645.0,341.5 647.1,341.1 649.3,340.8 651.5,340.4 653.6,340.1 655.6,339.7 657.6,339.4 659.6,339.0 661.6,338.6 663.6,338.2 665.7,337.8 667.7,337.2 669.8,336.7 669.8,336.7"/>
<polyline points="687.0,322.4 689.1,321.5 691.2,320.6 693.3,319.9 695.3,319.1 697.4,318.3 699.3,317.6 701.2,316.9 703.2,316.2 705.1,315.4 707.2,314.6 709.2,313.7 711.2,312.8 713.3,311.8 715.1,310.6 716.7,309.2 717.9,307.6 719.0,305.8 720.0,304.0 721.2,301.5 722.2,299.4 723.2,297.4 724.2,295.0 725.2,292.5 726.2,290.1 727.0,288.0 728.0,285.7 728.9,283.8 729.8,281.8 730.8,279.8 731.9,277.2 732.5,274.7 731.4,273.9 730.0,273.5 728.2,272.8 726.1,271.7 725.0,269.0 724.7,266.3 724.6,264.2 724.5,261.9 724.3,258.9 724.3,258.9"/>
<polyline points="823.8,238.7 821.4,238.7 818.9,238.7 816.5,238.6 814.3,238.6 811.9,238.7 809.2,238.7 806.7,239.0 804.7,240.5 803.9,242.7 803.0,245.2 802.0,248.1 801.2,251.1 801.1,253.6 801.9,256.0 802.4,258.0 802.1,259.9 801.4,262.0 801.0,263.0"/>
<polyline points="789.0,276.3 786.0,277.5 783.5,278.3 781.0,279.0 778.0,279.5 775.0,278.6 772.1,276.7 770.5,274.6 769.5,272.3 768.7,270.0 768.0,268.0 767.3,266.1 766.5,264.1 765.4,262.1 764.1,260.0 762.6,257.9 761.0,255.8 759.0,253.3 757.0,251.3 755.5,249.9 753.5,248.0 752.7,247.3"/>
<polyline points="630.0,359.0 633.0,358.8 635.4,358.6 637.8,358.4 640.0,358.3 642.2,358.1 644.4,357.9 646.5,357.7 648.6,357.5 651.1,357.2 653.8,356.7 656.2,356.0 658.2,355.4 660.1,354.7 662.1,353.9 664.0,353.2 666.7,352.0 668.9,351.0 671.1,350.0 673.3,348.9 675.4,347.9 677.2,347.0 679.1,346.1 681.4,345.0 683.6,343.8 685.9,342.6 688.0,341.4 690.0,340.1 691.7,339.0 693.4,337.9 695.1,336.7 696.9,335.5 699.1,334.0 701.1,332.7 703.0,331.6 705.0,330.7 707.0,329.9 708.9,329.2 710.8,328.5 712.8,327.8 714.8,327.2 716.6,326.5 718.6,325.7 719.6,325.2"/>
<polyline points="750.7,304.8 753.1,304.3 755.5,304.0 757.9,303.7 760.0,303.6 762.1,303.4 764.4,303.2 766.9,303.1 769.3,302.8 771.7,302.5 774.6,301.8 776.7,301.2 778.7,300.5 780.8,299.8 782.6,299.1 784.8,298.3 787.2,297.2 789.5,296.0 791.5,294.9 793.6,293.7 795.6,292.6 797.6,291.6 800.0,290.6 802.4,290.3 805.2,290.3 808.1,290.4 810.8,290.6 813.0,290.6 815.0,290.6 817.4,290.6 819.8,290.5 822.1,290.0 824.0,289.0 825.9,286.7 827.1,284.9 828.2,283.1 829.4,281.0 830.6,279.0 831.8,277.2 833.0,275.3 834.3,273.8 836.1,272.4 838.6,271.5 841.0,271.1 843.0,270.8 845.8,270.7 848.0,270.5 850.0,270.4 852.4,270.4 854.8,270.4 858.0,270.5 858.0,270.5"/>
<polyline points="635.7,369.0 637.8,368.7 640.1,368.4 642.3,368.2 644.3,367.9 646.6,367.6 649.2,367.2 651.3,366.7 653.4,366.2 655.4,365.6 657.9,364.7 660.1,363.9 662.1,363.2 664.0,362.4 665.9,361.7 667.9,360.9 670.0,360.0 672.2,359.0 674.2,358.0 676.2,357.1 678.2,356.0 680.4,355.0 682.4,353.9 684.5,352.9 686.7,351.8 689.0,350.6 690.9,349.6 692.8,348.7 694.8,347.7 696.7,346.7 698.7,345.7 700.8,344.6 702.9,343.6 704.7,342.6 706.6,341.7 708.7,340.6 711.0,339.5 713.6,338.3 716.2,337.3 718.8,336.3 721.4,335.2 723.8,334.0 725.9,332.7 727.8,331.5 729.6,330.4 731.3,329.3 733.1,328.1 734.9,326.9 736.9,325.6 739.0,324.2 741.0,322.9 742.9,321.6 744.7,320.4 747.4,318.4 749.9,317.2 751.8,316.5 753.8,316.0 756.0,315.4 758.1,314.9 760.6,314.4 763.0,313.9 765.4,313.3 767.8,312.8 769.7,312.4 771.7,312.0 773.7,311.6 775.8,311.1 777.8,310.7 779.8,310.3 781.9,309.9 784.0,309.5 786.2,309.0 788.1,308.6 790.1,308.2 792.3,307.8 794.8,307.3 795.8,307.1"/>
<polyline points="824.0,300.0 826.1,298.2 827.7,296.6 829.3,294.8 830.9,292.9 832.4,291.1 834.1,289.1 835.9,286.9 837.6,284.8 839.0,282.9 840.6,281.0 842.1,279.2 843.6,277.6 845.5,276.0 847.8,275.3 850.7,275.0 852.7,275.0 855.1,275.0 858.0,275.0 858.0,275.0"/>
<polyline points="641.6,379.0 643.9,378.6 646.1,378.3 648.7,377.8 651.2,377.1 653.4,376.4 655.3,375.7 657.3,374.9 659.3,374.1 661.5,373.1 663.7,372.2 665.8,371.3 668.0,370.4 670.3,369.5 672.5,368.6 674.7,367.7 676.7,366.9 678.8,366.2 680.9,365.4 683.0,364.6 685.0,363.8 687.1,363.0 689.4,362.1 691.7,361.2 694.1,360.2 696.3,359.3 698.5,358.4 700.4,357.6 702.3,356.8 704.3,355.9 706.5,355.0 708.7,354.0 711.0,353.0 713.0,352.1 715.1,351.2 717.3,350.1 719.6,349.1 721.8,348.0 724.0,346.9 726.0,345.9 727.0,345.4"/>
<polyline points="767.0,320.8 769.4,320.2 771.7,319.8 773.8,319.5 776.0,319.3 778.3,319.2 780.6,319.0 782.8,318.9 785.1,318.7 787.6,318.4 789.6,318.1 791.6,317.7 793.5,317.3 795.5,317.0 797.5,316.6 799.6,316.2 801.7,315.7 804.1,315.2 806.4,314.7 808.8,314.0 811.0,313.3 812.9,312.6 814.9,311.7 816.9,310.7 818.8,309.6 820.7,308.6 822.8,307.3 824.8,305.9 826.5,304.6 828.1,303.3 829.6,302.1 831.3,300.7 832.9,299.3 834.4,298.0 835.9,296.6 837.6,295.3 839.2,294.0 840.7,292.7 842.6,291.2 844.4,289.7 846.3,288.2 848.1,286.9 850.0,285.6 852.8,284.3 854.7,283.7 856.7,283.4 858.7,283.1 861.8,283.0 864.2,283.0 866.4,283.1 868.8,283.2 871.0,283.3 873.1,283.4 875.0,283.5"/>
<polyline points="647.3,391.0 649.2,391.0 652.2,390.8 655.3,389.8 657.8,388.7 660.2,387.6 662.2,386.7 664.3,385.7 666.2,384.8 668.2,383.9 670.3,382.9 672.4,382.0 674.5,381.1 676.9,380.1 679.1,379.2 681.1,378.4 683.0,377.7 684.9,376.9 686.9,376.0 689.0,375.0 691.2,373.8 693.3,372.6 695.3,371.5 697.4,370.3 699.5,369.0 701.6,367.8 703.6,366.5 705.8,365.3 708.0,364.0 710.3,362.8 712.4,361.6 714.5,360.5 716.6,359.4 718.7,358.3 720.8,357.2 722.8,356.1 724.9,355.0 727.0,353.8 729.0,352.6 730.8,351.4 732.5,350.4 734.2,349.2 736.0,348.1 737.9,346.8 740.1,345.3 742.0,344.1 743.8,342.9 745.7,341.6 747.3,340.4 749.0,339.2 750.7,338.0 752.5,336.8 754.2,335.7 755.9,334.6 758.0,333.5 760.1,332.6 762.4,331.9 764.5,331.3 766.7,330.8 769.0,330.3 771.3,329.7 773.6,329.3 775.9,328.8 778.4,328.3 780.7,327.8 782.8,327.3 784.9,326.9 787.0,326.4 789.1,326.0 791.3,325.5 793.6,325.1 795.7,324.6 797.7,324.2 799.7,323.8 802.2,323.3 804.5,322.8 806.5,322.4 808.7,322.0 810.8,321.6 812.9,321.2 815.6,320.6 817.8,320.0 817.8,320.0"/>
<polyline points="836.0,309.7 838.0,308.0 839.7,306.5 841.5,304.9 843.4,303.3 845.1,301.8 847.0,300.2 849.6,298.2 852.0,296.5 853.9,295.6 856.2,294.9 858.6,294.5 860.8,294.4 863.0,294.4 865.3,294.4 867.5,294.3 869.6,294.4 871.7,294.4 873.7,294.4 875.8,294.4 877.9,294.5 880.0,294.5 882.1,294.5 884.7,294.6 886.0,294.6"/>
<polyline points="658.7,409.8 661.7,408.7 663.9,407.9 666.2,407.0 668.0,406.0 669.9,404.6 671.6,403.3 673.3,401.8 675.1,400.3 676.7,399.0 678.5,397.5 680.9,395.5 682.4,394.1 684.0,392.8 685.6,391.5 687.3,390.3 689.5,389.0 691.5,387.9 693.5,386.8 695.7,385.7 697.9,384.5 699.8,383.4 701.6,382.4 703.4,381.2 705.1,380.1 706.8,378.9 708.5,377.7 710.3,376.5 712.0,375.3 713.8,374.2 715.6,373.1 717.5,372.0 719.5,371.1 721.5,370.3 723.4,369.6 725.3,368.9 727.3,368.3 729.6,367.5 732.1,366.7 734.0,366.0 736.3,365.3 739.0,364.5 741.4,363.7 743.3,363.1 745.3,362.5 747.6,361.6 749.0,361.0"/>
<polyline points="790.1,337.0 792.2,336.2 794.1,335.5 796.2,334.8 798.4,334.1 800.5,333.4 802.5,332.9 804.7,332.5 807.2,332.1 809.6,331.8 812.0,331.5 814.2,331.3 816.3,331.1 818.5,330.8 820.9,330.4 823.3,330.0 825.7,329.5 828.4,328.4 830.2,327.3 832.0,326.2 833.8,325.0 835.5,323.8 837.3,322.4 839.5,320.7 841.6,319.1 843.4,317.5 845.3,315.9 847.2,314.3 848.9,312.9 851.0,311.3 852.8,310.1 854.8,309.0 856.9,307.9 858.9,307.1 862.5,306.1 864.8,305.9 867.3,305.7 869.7,305.7 873.6,305.9 875.9,306.3 878.4,306.8 880.8,307.1 883.0,307.3 885.6,307.2 888.0,306.9 890.4,306.6 892.9,306.3 895.0,306.1 898.0,305.7 898.0,305.7"/>
<polyline points="658.7,415.0 661.4,415.4 665.3,416.0 667.9,417.3 670.6,419.6 673.0,422.0 675.4,424.6 676.7,426.2 678.1,427.8 680.9,430.3 683.0,431.8 685.2,433.4 687.3,434.9 689.0,436.0 691.6,437.4 693.6,438.3 695.7,439.1 698.4,440.0 701.4,440.5 703.9,440.7 706.3,440.8 709.5,440.8 712.4,440.4 714.5,440.0 716.9,439.6 719.4,439.2 721.8,438.9 724.1,438.7 726.6,438.5 729.1,438.3 731.3,438.1 733.5,438.0 735.8,437.8 738.2,437.6 740.6,437.3 742.9,437.0 745.0,436.4 748.5,434.8 750.3,433.9 752.4,433.0 754.6,432.2 756.8,431.4 759.1,430.5 761.2,429.7 763.3,429.0 765.4,428.2 767.4,427.5 769.4,426.8 771.4,426.1 773.5,425.4 775.7,424.6 777.9,423.9 780.1,423.2 782.3,422.5 784.5,421.7 786.5,421.1 788.5,420.5 790.4,419.9 792.6,419.2 794.8,418.5 796.9,417.9 799.0,417.3 800.0,417.0"/>
<polyline points="835.0,409.0 837.0,408.6 839.1,408.2 841.5,407.8 844.0,407.3 846.5,406.9 848.9,406.5 851.0,406.2 853.1,405.8 855.4,405.5 857.5,405.3 859.6,405.0 861.8,404.7 864.1,404.4 866.1,404.1 868.2,403.8 870.3,403.3 872.3,402.6 874.2,401.9 876.2,400.8 878.3,399.7 880.4,398.4 882.4,397.2 884.5,395.8 886.9,394.1 888.9,392.4 890.7,390.8 892.6,389.1 894.4,387.5 896.2,385.9 898.4,384.0 900.7,382.2 902.5,380.7 904.4,379.2 906.4,377.7 908.1,376.4 910.0,375.1 912.5,373.7 915.5,372.8 919.0,372.5 921.9,372.5 924.1,372.5 926.2,372.5 928.5,372.6 930.8,372.7 932.8,372.8 934.8,372.8 937.3,372.9 937.3,372.9"/>
<polyline points="687.6,479.7 689.6,479.5 691.8,479.3 694.2,479.1 696.8,478.8 699.3,478.5 701.5,478.1 703.5,477.8 706.3,477.0 708.6,476.3 710.9,475.5 713.2,474.7 715.5,473.9 718.0,473.0 720.8,472.0 723.3,471.1 725.5,470.3 727.8,469.4 730.0,468.6 732.2,467.9 735.0,467.0 737.8,466.4 740.1,466.0 742.4,465.5 744.8,465.1 747.0,464.7 749.6,464.1 752.0,463.5 753.9,462.8 756.3,461.9 758.4,461.1 760.3,460.3 762.4,459.5 764.6,458.6 767.0,457.5 769.8,455.8 772.5,454.0 774.6,453.0 777.0,452.1 779.3,451.3 781.4,450.6 783.6,449.9 785.6,449.2 787.6,448.5 789.6,447.8 791.5,447.2 793.5,446.5 795.4,445.9 797.7,445.1 800.0,444.3 802.1,443.5 804.2,442.8 806.1,442.1 808.0,441.3 810.0,440.6 812.1,439.8 814.1,439.0 816.1,438.3 818.2,437.5 820.3,436.7 822.6,435.9 824.9,435.1 827.1,434.4 829.4,433.6 831.5,432.9 833.5,432.2 835.6,431.5 837.7,430.8 839.6,430.1 841.6,429.5 843.6,428.8 845.6,428.2 847.6,427.5 849.7,426.8 851.7,426.1 853.8,425.4 855.9,424.7 858.0,424.1 858.0,424.1"/>
<polyline points="892.0,411.7 893.9,410.6 895.7,409.6 897.5,408.5 899.2,407.4 901.1,406.3 903.1,405.0 905.3,403.6 907.1,402.5 909.1,401.3 911.5,399.8 913.6,398.5 915.3,397.5 918.0,396.2 920.6,395.4 923.1,395.2 925.4,395.0 927.4,394.9 929.5,394.9 931.8,394.9 934.0,394.9 936.3,394.9 938.7,395.0 941.4,395.0 942.9,395.0"/>
<polyline points="726.5,522.0 729.1,520.1 731.0,518.7 733.0,517.2 735.0,516.0 737.5,514.6 739.7,513.3 741.7,512.2 743.6,511.2 745.4,510.2 747.2,509.3 749.1,508.4 751.0,507.5 752.9,506.9 755.1,506.3 757.5,505.8 760.0,505.2 762.3,504.7 764.6,504.2 767.0,503.5 770.4,501.7 773.5,499.3 775.9,497.1 777.6,495.4 779.2,493.8 780.9,492.0 782.5,490.3 784.1,488.6 786.0,486.8 787.6,485.5 789.3,484.3 791.2,483.0 793.3,481.8 795.6,480.5 796.7,479.9"/>
<polyline points="840.5,457.8 842.5,456.9 844.5,456.0 846.4,455.2 848.3,454.4 850.3,453.5 852.4,452.7 854.4,451.8 856.4,451.0 858.3,450.2 860.4,449.3 862.5,448.4 864.6,447.5 866.8,446.6 869.0,445.7 871.2,444.8 873.4,443.8 875.3,443.0 877.3,442.2 879.2,441.4 881.4,440.4 883.6,439.5 885.7,438.5 887.9,437.5 890.0,436.5 892.1,435.4 894.1,434.4 896.0,433.3 897.9,432.2 899.9,431.1 901.9,430.0 903.8,429.0 905.6,427.9 907.5,426.9 909.2,426.0 911.0,425.0 913.1,423.9 915.1,422.9 916.9,422.0 918.7,421.1 920.5,420.2 922.5,419.3 924.6,418.3 927.0,417.3 930.1,416.3 933.1,415.8 936.1,415.7 938.2,415.7 940.5,415.7 942.8,415.7 944.8,415.8 946.8,415.8 948.9,415.9 951.0,415.9 953.5,416.0 954.8,416.0"/>
<polyline points="733.0,566.0 735.3,566.8 737.8,567.6 740.2,568.4 742.4,569.1 744.5,569.9 746.7,570.6 748.8,571.3 751.0,572.0 753.0,572.7 755.1,573.4 757.4,574.3 759.8,575.1 762.1,575.9 764.3,576.5 767.0,577.0 769.5,576.9 772.5,576.3 774.5,575.8 776.6,575.2 778.6,574.6 781.4,573.8 783.7,573.1 786.0,572.4 788.3,571.7 790.4,571.0 792.4,570.3 794.4,569.7 796.6,568.9 798.8,568.0 800.9,567.1 803.1,566.0 805.3,564.5 807.3,562.8 809.2,561.1 811.1,559.3 812.7,557.8 814.2,556.4 816.1,554.6 817.8,553.0 819.3,551.5 820.8,550.1 822.4,548.7 824.1,547.3 826.0,546.0 828.2,545.0 830.4,544.0 832.6,543.2 834.6,542.5 836.5,541.8 838.4,541.2 840.6,540.4 842.9,539.7 845.3,538.8 846.5,538.4"/>
<polyline points="883.9,521.0 885.8,519.6 887.5,518.3 889.1,517.0 890.7,515.7 892.3,514.3 894.0,512.9 895.7,511.5 897.3,510.1 898.9,508.7 900.5,507.4 902.2,505.9 904.1,504.3 905.9,502.8 907.6,501.3 909.2,500.0 910.8,498.6 912.4,497.3 914.0,495.9 915.6,494.5 917.3,493.0 919.1,491.4 920.9,489.5 922.7,487.6 924.0,485.5 925.2,483.4 926.2,481.4 927.2,479.4 928.1,477.2 929.0,475.1 929.9,473.1 930.9,470.9 932.0,468.6 932.9,466.7 933.8,464.8 934.7,462.9 935.6,461.0 936.6,459.0 937.6,457.0 938.6,455.0 939.8,452.8 941.0,450.7 942.5,448.9 944.3,447.6 946.2,446.9 948.8,446.6 951.1,446.5 953.2,446.6 955.4,446.7 957.8,446.9 960.0,447.0 960.0,447.0"/>
<polyline points="750.5,632.5 753.5,632.3 755.7,632.1 758.2,631.9 760.6,631.7 763.0,631.5 765.6,631.0 767.7,630.3 770.1,629.4 772.5,628.3 774.7,627.1 776.7,626.0 778.8,624.6 780.6,623.4 782.4,622.0 784.3,620.6 786.1,619.2 787.8,617.9 789.4,616.7 791.1,615.3 792.8,613.9 794.5,612.5 796.2,611.1 797.9,609.6 799.7,608.2 801.4,606.8 803.1,605.4 805.0,604.0 806.9,602.8 808.7,601.6 810.5,600.6 812.3,599.5 814.1,598.4 816.2,597.2 818.4,595.9 820.1,594.9 822.1,593.7 824.4,592.3 826.8,590.8 829.1,589.2 831.1,587.7 832.9,586.1 834.4,584.3 835.8,582.6 837.2,580.8 838.6,579.0 839.9,577.3 841.7,575.4 843.5,573.9 845.8,572.3 848.3,570.6 850.7,569.0 853.0,567.5 854.8,566.3 856.5,565.1 858.2,563.9 860.0,562.6 861.9,561.3 863.8,560.0 865.7,558.7 867.8,557.4 870.0,556.0 871.9,554.9 873.9,553.9 875.9,552.8 878.0,551.7 879.9,550.7 881.7,549.8 883.5,548.9 885.4,547.9 887.3,546.9 889.2,545.9 891.4,544.6 892.5,544.0"/>
<polyline points="905.9,528.8 907.6,527.1 909.2,525.6 910.7,524.1 912.2,522.6 913.7,521.2 915.1,519.8 916.6,518.4 918.1,517.0 919.5,515.6 921.0,514.2 922.5,512.8 924.0,511.4 925.7,509.8 927.4,508.2 929.0,506.7 930.5,505.2 932.1,503.7 933.7,502.2 935.3,500.6 937.0,499.1 938.6,497.5 940.3,495.9 942.0,494.4 943.7,492.8 945.4,491.3 947.1,489.8 948.9,488.3 951.1,487.0 953.1,486.9 955.4,487.0 957.9,487.2 960.4,487.5 962.5,487.8 964.7,488.0 967.3,488.3 969.9,488.5 972.2,488.6 974.6,488.6 977.0,488.7 979.0,488.7 981.0,488.8 983.1,488.9 985.2,488.9 987.7,489.0 989.0,489.0"/>
<polyline points="785.4,658.0 785.4,656.3 785.7,653.9 786.6,652.2 788.4,650.4 791.0,649.0 793.0,648.6 795.9,648.2 798.0,648.0 800.2,647.7 802.3,647.4 805.0,646.8 807.7,645.8 810.0,644.7 812.0,643.8 813.8,642.9 815.9,642.0 818.2,640.9 820.1,640.1 822.0,639.4 823.9,638.7 826.3,638.0 828.7,637.3 831.1,636.6 833.4,636.0 835.7,635.3 838.0,634.7 840.1,634.2 842.2,633.8 845.1,633.0 847.8,631.8 850.6,630.0 853.0,627.8 854.6,625.3 855.9,623.1 857.1,620.9 858.4,618.9 859.7,617.2 861.4,615.3 863.4,613.3 865.6,611.3 867.7,609.5 870.0,607.9 872.3,606.5 874.5,605.2 876.4,604.3 878.2,603.3 880.6,602.1 882.7,601.0 884.6,600.0 886.6,599.1 888.7,598.1 891.2,597.0 893.0,596.2 894.9,595.4 897.1,594.4 899.4,593.4 901.8,592.3 903.3,591.5 905.6,590.0 906.4,589.4"/>
<polyline points="937.3,563.8 939.2,562.9 941.2,562.0 943.2,561.3 945.3,560.5 947.5,559.8 949.8,559.0 952.1,558.3 954.1,557.5 956.2,556.8 958.2,556.1 960.1,555.4 961.9,554.5 963.8,553.4 965.8,552.1 967.7,550.8 969.5,549.5 971.1,548.3 972.9,547.0 975.4,545.1 976.9,543.8 978.5,542.6 981.7,540.8 983.9,540.4 986.0,540.3 988.1,540.2 990.2,540.1 993.1,540.0 994.8,540.0"/>
<polyline points="787.8,657.0 789.1,655.9 791.2,654.5 794.3,653.7 796.8,653.5 799.7,653.3 802.5,652.9 805.0,652.4 807.6,651.3 809.9,650.3 811.9,649.3 813.8,648.4 815.8,647.4 818.1,646.2 820.0,645.4 822.0,644.7 823.9,644.1 826.2,643.4 828.5,642.7 831.0,642.1 833.2,641.5 835.7,640.8 838.2,640.2 840.8,639.8 843.5,639.3 846.2,638.7 848.6,637.8 848.6,637.8"/>
<polyline points="874.2,610.3 876.0,608.9 878.0,607.8 880.0,607.0 882.0,606.1 884.1,605.4 886.2,604.6 888.7,603.7 891.2,602.9 893.9,601.8 895.7,601.1 897.6,600.3 899.5,599.5 902.2,598.4 904.2,597.6 906.1,596.7 908.1,595.9 910.3,594.8 912.3,593.7 914.7,592.2 917.2,590.7 919.5,589.1 921.4,587.6 923.3,585.8 924.7,584.2 926.2,582.5 927.8,580.8 929.4,579.2 931.3,577.4 933.5,576.0 935.5,575.0 937.6,574.1 939.6,573.3 941.8,572.5 944.1,571.6 946.2,570.8 948.3,570.0 950.5,569.1 952.6,568.1 954.6,567.0 956.3,565.9 958.0,564.9 959.8,563.8 961.5,562.7 963.7,561.3 965.7,560.1 967.5,559.0 969.2,558.0 971.1,556.8 973.1,555.6 975.3,554.3 977.3,553.2 979.3,552.1 981.7,551.0 984.2,550.4 986.3,550.1 988.4,549.9 990.5,549.8 993.1,549.6 994.8,549.5"/>
<polyline points="811.6,658.0 813.6,656.5 815.6,655.1 817.8,653.6 820.0,652.2 822.2,651.0 824.6,650.0 826.9,649.0 829.3,648.0 831.7,647.1 834.1,646.1 836.0,645.4 838.0,644.6 839.9,643.9 842.3,643.1 844.7,642.2 847.2,641.3 849.5,640.5 851.8,639.5 853.9,638.5 855.6,637.3 857.3,636.0 858.1,635.4"/>
<polyline points="870.9,619.2 873.8,618.6 876.0,617.6 878.2,616.7 880.2,615.8 882.3,614.9 884.2,614.0 886.1,613.2 888.0,612.3 890.2,611.3 892.4,610.3 894.5,609.4 896.6,608.5 898.7,607.5 901.0,606.5 903.0,605.7 904.9,604.9 906.8,604.0 908.8,603.2 911.1,602.2 913.2,601.2 915.0,600.3 915.0,600.3"/>
<polyline points="938.0,582.9 940.4,581.9 942.6,581.1 944.6,580.4 946.6,579.8 948.9,579.1 951.1,578.4 953.2,577.7 955.3,577.0 957.3,576.4 959.8,575.5 961.9,574.5 963.8,573.6 965.6,572.4 967.5,571.2 969.3,569.9 971.7,568.3 973.8,567.0 975.9,565.9 978.3,564.7 980.8,563.6 983.1,562.6 986.9,561.7 989.2,561.5 991.6,561.4 994.8,561.4 994.8,561.4"/>
<polyline points="825.0,658.0 827.7,656.9 829.8,656.0 831.7,655.2 833.6,654.4 835.8,653.5 838.4,652.5 841.0,651.4 843.4,650.5 845.3,649.7 847.2,649.0 849.5,648.1 851.8,647.2 854.4,646.5 856.3,646.4 857.3,646.3"/>
<polyline points="880.0,623.3 881.9,622.4 883.7,621.5 885.9,620.7 888.0,619.9 890.1,619.2 892.2,618.5 894.2,617.8 896.1,617.1 898.1,616.5 900.0,615.8 902.1,615.1 904.4,614.2 906.7,613.3 908.8,612.4 911.0,611.5 913.0,610.6 915.1,609.7 917.3,608.8 919.4,607.8 921.5,606.9 923.5,606.0 925.5,605.2 927.4,604.3 929.4,603.5 931.8,602.5 934.0,601.6 936.1,600.8 938.2,599.9 940.3,599.1 942.3,598.3 944.3,597.6 946.3,596.9 948.4,596.3 950.4,596.0 952.5,595.7 954.9,595.5 957.2,595.4 959.5,595.2 961.7,595.1 964.3,594.8 966.6,594.2 969.2,593.4 971.9,592.4 974.6,591.5 977.0,590.8 979.1,590.3 981.1,589.8 983.2,589.3 985.4,588.9 987.6,588.4 989.9,587.9 992.5,587.3 994.8,586.8 994.8,586.8"/>
</g>
</g>
<g font-weight="bold" font-size="14.5" fill="#14100a" stroke="#14100a" stroke-width="0.45" text-anchor="middle">
<text transform="translate(677,328) rotate(140)" y="5">0</text>
<text transform="translate(736.5,316.5) rotate(143)" y="5">0.5</text>
<text transform="translate(747,334) rotate(141)" y="5">1.5</text>
<text transform="translate(770,349.5) rotate(138)" y="5">2.5</text>
<text transform="translate(797,271.5) rotate(132)" y="5">0</text>
<text transform="translate(810,305) rotate(158)" y="5">1</text>
<text transform="translate(827,316) rotate(150)" y="5">2</text>
<text transform="translate(818.5,415) rotate(163)" y="5">2.5</text>
<text transform="translate(875.7,419) rotate(160)" y="5">2</text>
<text transform="translate(818.6,470) rotate(148)" y="5">1.5</text>
<text transform="translate(865.4,530.6) rotate(155)" y="5">1.5</text>
<text transform="translate(899.6,537.5) rotate(150)" y="5">2</text>
<text transform="translate(923,578) rotate(135)" y="5">2</text>
<text transform="translate(927,592) rotate(140)" y="5">1</text>
<text transform="translate(862,624.5) rotate(140)" y="5">1.5</text>
<text transform="translate(871,636.8) rotate(140)" y="5">0.5</text>
</g>
<path d="M732.0 254.8 L728.4 260.5" stroke="#ea6a26" stroke-width="1.3" stroke-linecap="round" fill="none"/><circle cx="734.6" cy="251.8" r="4.5" fill="#f5360f"/><path d="M731.7 252.4 Q732.4 249.60000000000002 735.0 248.5" stroke="#fff" stroke-width="1.2" fill="none" opacity=".8" stroke-linecap="round"/>
<path d="M910.6999999999999 626.6 L907.0999999999999 632.3000000000001" stroke="#ea6a26" stroke-width="1.3" stroke-linecap="round" fill="none"/><circle cx="913.3" cy="623.6" r="4.5" fill="#f5360f"/><path d="M910.4 624.2 Q911.0999999999999 621.4 913.6999999999999 620.3000000000001" stroke="#fff" stroke-width="1.2" fill="none" opacity=".8" stroke-linecap="round"/>
</g>
<!-- BATHY-END -->
<!-- grid -->
<g stroke-width="1" shape-rendering="crispEdges" fill="none">
<path d="M86.5 144V819M418.5 144V819M751.5 144V819M1084.5 144V819M0 365.5H1280" stroke="#fff" opacity=".2"/>
<path d="M85.5 144V819M417.5 144V819M750.5 144V819M1083.5 144V819M0 366.5H1280" stroke="#5f7f94" opacity=".21"/>
</g>

<!-- nav icon -->
<g>
<path d="M13 150.5A15 15 0 0 1 13 178.5" fill="none" stroke="#a9cfe8" stroke-width="0" />
<path d="M14.2 151.4A14 14 0 1 1 14.2 177.8" fill="none" stroke="#a5cde6" stroke-width="6.4"/>
<path d="M14.4 154.4A11.2 11.2 0 1 1 14.4 174.8" fill="none" stroke="#1b3d6f" stroke-width="1.1"/>
<path d="M14.1 151.6A13.9 13.9 0 1 1 14.1 177.6" fill="none" stroke="#1b3d6f" stroke-width="1.1"/>
<path d="M13.8 148.9A16.6 16.6 0 1 1 13.8 180.3" fill="none" stroke="#1b3d6f" stroke-width="1.1"/>
<path d="M2.8 161.6H16.5L11.3 156.6L14.6 153.3L26.4 164.6L14.6 176L11.3 172.6L16.5 167.6H2.8Z" fill="#a5cde6" stroke="#1b3d6f" stroke-width="1.4" stroke-linejoin="miter"/>
</g>
<!-- grid labels -->
<g font-weight="bold" font-size="9.2" fill="#0c0c0c" stroke-linejoin="round">
<g transform="translate(76.9,144.3) rotate(90)"><text stroke="#fff" stroke-width="2" opacity=".38" fill="#fff" textLength="52.6" lengthAdjust="spacingAndGlyphs">E008.54.900</text><text textLength="52.6" lengthAdjust="spacingAndGlyphs">E008.54.900</text></g>
<g transform="translate(408.9,144.3) rotate(90)"><text stroke="#fff" stroke-width="2" opacity=".38" fill="#fff" textLength="52.6" lengthAdjust="spacingAndGlyphs">E008.55.000</text><text textLength="52.6" lengthAdjust="spacingAndGlyphs">E008.55.000</text></g>
<g transform="translate(741.9,144.3) rotate(90)"><text stroke="#fff" stroke-width="2" opacity=".38" fill="#fff" textLength="52.6" lengthAdjust="spacingAndGlyphs">E008.55.100</text><text textLength="52.6" lengthAdjust="spacingAndGlyphs">E008.55.100</text></g>
<g transform="translate(1074.9,144.3) rotate(90)"><text stroke="#fff" stroke-width="2" opacity=".38" fill="#fff" textLength="52.6" lengthAdjust="spacingAndGlyphs">E008.55.200</text><text textLength="52.6" lengthAdjust="spacingAndGlyphs">E008.55.200</text></g>
<text x="-0.3" y="375.5" stroke="#fff" stroke-width="2" opacity=".38" fill="#fff" textLength="53" lengthAdjust="spacingAndGlyphs">N051.11.500</text><text x="-0.3" y="375.5" textLength="53" lengthAdjust="spacingAndGlyphs">N051.11.500</text>
</g>
<!-- river labels -->
<g transform="translate(546.0,522.7) rotate(-23)"><text text-anchor="middle" y="4" font-size="12.4" stroke="#e4f4ff" stroke-width="4.2" stroke-linejoin="round" opacity=".85" fill="#eaf6ff">Eder</text><text text-anchor="middle" y="4" font-size="12.4" fill="#5a9ad1">Eder</text></g>
<g transform="translate(332.5,637.7) rotate(-24)"><text text-anchor="middle" y="4" font-size="12.4" stroke="#e4f4ff" stroke-width="4.2" stroke-linejoin="round" opacity=".85" fill="#eaf6ff">Eder</text><text text-anchor="middle" y="4" font-size="12.4" fill="#5a9ad1">Eder</text></g>
<g transform="translate(117.0,744.8) rotate(-30)"><text text-anchor="middle" y="4" font-size="12.4" stroke="#e4f4ff" stroke-width="4.2" stroke-linejoin="round" opacity=".85" fill="#eaf6ff">Eder</text><text text-anchor="middle" y="4" font-size="12.4" fill="#5a9ad1">Eder</text></g>
<g transform="translate(989.0,333.2) rotate(-13)"><text text-anchor="middle" y="4" font-size="12.4" stroke="#e4f4ff" stroke-width="4.2" stroke-linejoin="round" opacity=".85" fill="#eaf6ff">Eder</text><text text-anchor="middle" y="4" font-size="12.4" fill="#5a9ad1">Eder</text></g>
<g transform="translate(1230.5,312.7) rotate(-8)"><text text-anchor="middle" y="4" font-size="12.4" stroke="#e4f4ff" stroke-width="4.2" stroke-linejoin="round" opacity=".85" fill="#eaf6ff">Eder</text><text text-anchor="middle" y="4" font-size="12.4" fill="#5a9ad1">Eder</text></g>
<g transform="translate(1265.5,308.7) rotate(-8)"><text text-anchor="middle" y="4" font-size="12.4" stroke="#e4f4ff" stroke-width="4.2" stroke-linejoin="round" opacity=".85" fill="#eaf6ff">er</text><text text-anchor="middle" y="4" font-size="12.4" fill="#5a9ad1">er</text></g>
<!-- attribution -->
<rect x="0" y="805.5" width="1280" height="14" fill="#fff" opacity=".62"/>
<text x="5.5" y="816.8" font-size="8.95" fill="#222">All maps © <tspan fill="#1a1ae6" text-decoration="underline">OpenCycleMap</tspan>, map data © <tspan fill="#1a1ae6" text-decoration="underline">OpenStreetMap</tspan></text>
<!-- legend -->
<rect x="1072" y="776" width="209" height="44" fill="#fff" stroke="#8f8f8f" stroke-width="1"/>
<rect x="1073.00" y="777" width="17.6" height="25" fill="#fffff0"/><rect x="1090.25" y="777" width="17.6" height="25" fill="#ffffcc"/><rect x="1107.50" y="777" width="17.6" height="25" fill="#ffff78"/><rect x="1124.75" y="777" width="17.6" height="25" fill="#ffff3c"/><rect x="1142.00" y="777" width="17.6" height="25" fill="#ffeb14"/><rect x="1159.25" y="777" width="17.6" height="25" fill="#ffd70a"/><rect x="1176.50" y="777" width="17.6" height="25" fill="#ffaf0f"/><rect x="1193.75" y="777" width="17.6" height="25" fill="#ff8c0a"/><rect x="1211.00" y="777" width="17.6" height="25" fill="#ff690a"/><rect x="1228.25" y="777" width="17.6" height="25" fill="#ff4b05"/><rect x="1245.50" y="777" width="17.6" height="25" fill="#ee0a05"/><rect x="1262.75" y="777" width="17.6" height="25" fill="#c00000"/>
<g font-weight="bold" font-size="10.4" fill="#111" lengthAdjust="spacingAndGlyphs"><text x="1075.5" y="815.8" textLength="20.5" lengthAdjust="spacingAndGlyphs">-0.5</text><text x="1134" y="815.8" textLength="87.5" lengthAdjust="spacingAndGlyphs">Depth in metres</text><text x="1263.3" y="815.8" textLength="15.7" lengthAdjust="spacingAndGlyphs">3.0</text></g>

</svg>
</body></html>
